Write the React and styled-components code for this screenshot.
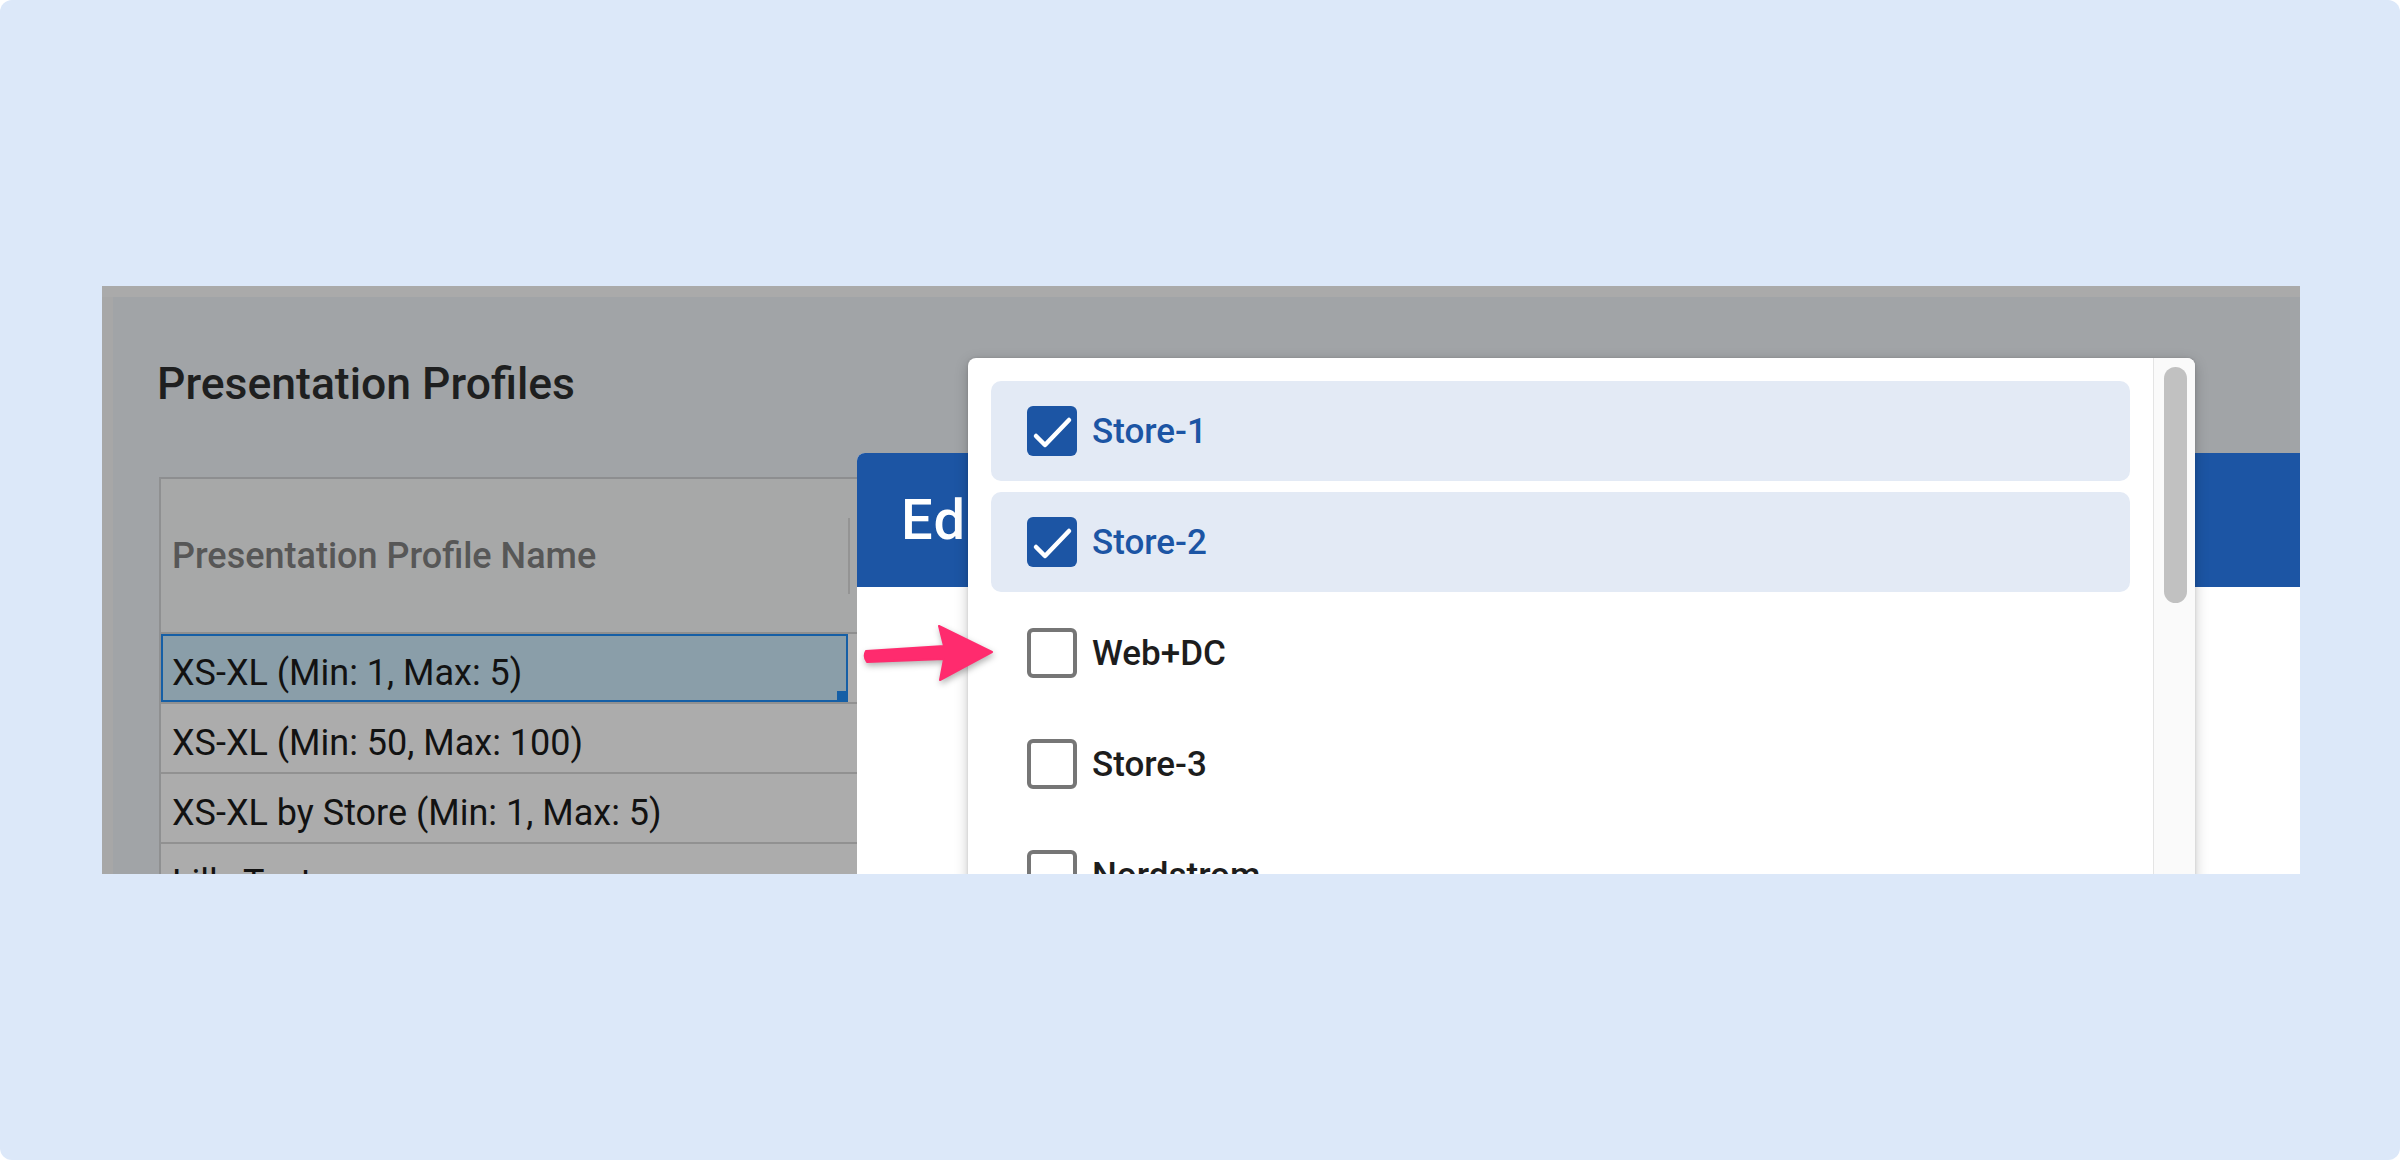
import React from "react";
import styled, { createGlobalStyle } from "styled-components";

const GlobalStyle = createGlobalStyle`
  html, body {
    margin: 0;
    padding: 0;
    background: #ffffff;
  }
  body {
    font-family: Roboto, "Noto Sans", "Liberation Sans", Arial, sans-serif;
  }
`;

const profiles = [
  { name: "XS-XL (Min: 1, Max: 5)", selected: true },
  { name: "XS-XL (Min: 50, Max: 100)" },
  { name: "XS-XL by Store (Min: 1, Max: 5)" },
  { name: "Lilly Test" },
];

const stores = [
  { name: "Store-1", checked: true },
  { name: "Store-2", checked: true },
  { name: "Web+DC" },
  { name: "Store-3" },
  { name: "Nordstrom" },
];

const App = () => {
  return (
    <>
      <GlobalStyle />
      <Page>
        <Shot>
          <TopBand />
          <ShotBody>
            <LeftStrip />
            <Main>
              <Title>Presentation Profiles</Title>
              <Table>
                <HeaderRow>
                  <HeaderCell>Presentation Profile Name</HeaderCell>
                  <ColDivider />
                </HeaderRow>
                {profiles.map((p) => (
                  <Row key={p.name}>
                    <Cell selected={p.selected}>{p.name}</Cell>
                  </Row>
                ))}
              </Table>
            </Main>
          </ShotBody>

          <Modal>
            <ModalHeader>Edit Presentation Profile</ModalHeader>
            <ModalBody />
          </Modal>

          <Dropdown>
            <OptionList>
              {stores.map((s) => (
                <Option key={s.name} checked={s.checked}>
                  <Box checked={s.checked}>
                    {s.checked && (
                      <svg width="50" height="50" viewBox="0 0 50 50">
                        <polyline
                          points="9,30 18,39 42,14"
                          fill="none"
                          stroke="#ffffff"
                          strokeWidth="4.5"
                          strokeLinecap="round"
                          strokeLinejoin="round"
                        />
                      </svg>
                    )}
                  </Box>
                  <OptionLabel checked={s.checked}>{s.name}</OptionLabel>
                </Option>
              ))}
            </OptionList>
            <ScrollTrack>
              <ScrollThumb />
            </ScrollTrack>
          </Dropdown>

          <Arrow width="140" height="70" viewBox="0 0 140 70">
            <path
              d="M6 31 L84 26 L79 6 L132 32 L80 60 L84 39 L7 42 Q3 36.5 6 31 Z"
              fill="#ff2b6e"
              strokeLinejoin="round"
              stroke="#ff2b6e"
              strokeWidth="2"
            />
          </Arrow>
        </Shot>
      </Page>
    </>
  );
};

export default App;

const Page = styled.div`
  width: 2400px;
  height: 1160px;
  box-sizing: border-box;
  padding-left: 102px;
  background: #dce8f9;
  border-radius: 12px;
  display: flex;
  align-items: center;
`;

const Shot = styled.div`
  position: relative;
  width: 2198px;
  height: 588px;
  overflow: hidden;
  background: #a1a4a7;
  display: flex;
  flex-direction: column;
`;

const TopBand = styled.div`
  height: 11px;
  flex: 0 0 11px;
  background: #aaaaaa;
`;

const ShotBody = styled.div`
  flex: 1;
  display: flex;
`;

const LeftStrip = styled.div`
  width: 11px;
  flex: 0 0 11px;
  background: #a7a7a7;
`;

const Main = styled.div`
  flex: 1;
  padding: 61px 0 0 44px;
  display: flex;
  flex-direction: column;
`;

const Title = styled.h1`
  margin: 0;
  font-size: 44.5px;
  line-height: 52px;
  font-weight: 500;
  color: #1e1f20;
`;

const Table = styled.div`
  margin: 67px 0 0 2px;
  width: 900px;
  border-top: 2px solid #8d8e90;
  border-left: 2px solid #8f9091;
  background: #acacac;
`;

const HeaderRow = styled.div`
  display: flex;
  align-items: center;
  height: 153px;
  background: #a7a8a8;
  border-bottom: 2px solid #8f8f8f;
`;

const HeaderCell = styled.div`
  flex: 0 0 687px;
  box-sizing: border-box;
  padding: 0 0 0 11px;
  font-size: 36px;
  font-weight: 500;
  color: #575757;
`;

const ColDivider = styled.div`
  width: 2px;
  height: 76px;
  background: #949494;
`;

const Row = styled.div`
  display: flex;
  height: 68px;
  border-bottom: 2px solid #919191;
`;

const Cell = styled.div`
  position: relative;
  flex: 0 0 687px;
  box-sizing: border-box;
  display: flex;
  align-items: center;
  padding: 9px 0 0 11px;
  font-size: 36px;
  color: #121212;
  background: ${(p) => (p.selected ? "#8a9ea9" : "transparent")};
  box-shadow: ${(p) => (p.selected ? "inset 0 0 0 2px #155fa6" : "none")};

  &::after {
    content: "";
    display: ${(p) => (p.selected ? "block" : "none")};
    position: absolute;
    right: 0;
    bottom: 0;
    width: 11px;
    height: 11px;
    background: #155fa6;
  }
`;

const Modal = styled.div`
  position: absolute;
  left: 755px;
  top: 167px;
  right: -40px;
  bottom: -40px;
  display: flex;
  flex-direction: column;
  border-radius: 8px 0 0 0;
  overflow: hidden;
  background: #ffffff;
`;

const ModalHeader = styled.div`
  flex: 0 0 134px;
  display: flex;
  align-items: center;
  padding-left: 44px;
  background: #1c55a4;
  color: #ffffff;
  font-size: 56px;
  line-height: 64px;
  font-weight: 500;
  letter-spacing: 1.5px;
  white-space: nowrap;
`;

const ModalBody = styled.div`
  flex: 1;
  background: #ffffff;
`;

const Dropdown = styled.div`
  position: absolute;
  left: 866px;
  top: 72px;
  width: 1227px;
  height: 600px;
  display: flex;
  background: #ffffff;
  border-radius: 8px;
  box-shadow: 0 4px 14px rgba(0, 0, 0, 0.22), 0 0 3px rgba(0, 0, 0, 0.12);
  overflow: hidden;
`;

const OptionList = styled.div`
  flex: 1;
  padding: 23px 23px 0 23px;
  display: flex;
  flex-direction: column;
  gap: 11px;
`;

const Option = styled.div`
  flex: 0 0 100px;
  display: flex;
  align-items: center;
  gap: 15px;
  padding-left: 36px;
  border-radius: 10px;
  background: ${(p) => (p.checked ? "#e3eaf5" : "transparent")};
`;

const Box = styled.div`
  width: 50px;
  height: 50px;
  box-sizing: border-box;
  border-radius: 6px;
  display: flex;
  background: ${(p) => (p.checked ? "#1c55a4" : "#ffffff")};
  border: ${(p) => (p.checked ? "none" : "4px solid #767676")};
`;

const OptionLabel = styled.span`
  font-size: 35px;
  font-weight: 500;
  color: ${(p) => (p.checked ? "#1c55a4" : "#1d1d1d")};
`;

const ScrollTrack = styled.div`
  flex: 0 0 41px;
  background: #fafafa;
  border-left: 1px solid #e4e4e4;
  padding-top: 9px;
`;

const ScrollThumb = styled.div`
  margin-left: 10px;
  width: 23px;
  height: 236px;
  border-radius: 12px;
  background: #c1c1c1;
`;

const Arrow = styled.svg`
  position: absolute;
  left: 758px;
  top: 334px;
  filter: drop-shadow(1px 3px 3px rgba(0, 0, 0, 0.3));
`;
